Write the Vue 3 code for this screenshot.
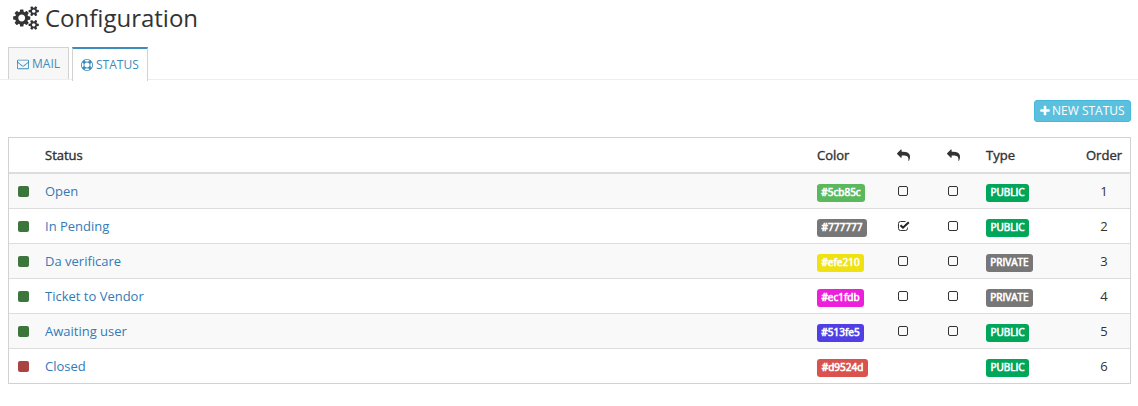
<template>
  <div class="page">
    <h1 class="title">
      <svg class="cogs" viewBox="0 0 1920 1792"><path :d="icons.cogs" /></svg>
      <span>Configuration</span>
    </h1>

    <ul class="tabs">
      <li class="tab">
        <svg class="tab-icon" viewBox="0 0 1792 1792"><path :d="icons.envelope" /></svg>
        <a>MAIL</a>
      </li>
      <li class="tab active">
        <svg class="tab-icon" viewBox="0 0 1792 1792"><path :d="icons.ring" /></svg>
        <a>STATUS</a>
      </li>
    </ul>

    <div class="toolbar">
      <button class="btn-new">
        <svg viewBox="192 0 1408 1792"><path :d="icons.plus" /></svg>
        <span>NEW STATUS</span>
      </button>
    </div>

    <div class="table">
      <div class="row head">
        <div></div>
        <div>Status</div>
        <div>Color</div>
        <div class="center"><svg class="reply" viewBox="0 0 1792 1792"><path :d="icons.reply" /></svg></div>
        <div class="center"><svg class="reply" viewBox="0 0 1792 1792"><path :d="icons.reply" /></svg></div>
        <div>Type</div>
        <div class="center">Order</div>
      </div>
      <div v-for="row in rows" :key="row.order" class="row">
        <div><i class="square" :class="{ closed: row.closed }"></i></div>
        <div><a class="link">{{ row.name }}</a></div>
        <div><span class="label" :style="{ backgroundColor: row.color, width: row.width + 'px' }">{{ row.color }}</span></div>
        <div v-for="(checked, i) in row.checks" :key="i" class="center">
          <svg v-if="checked !== null" class="check" viewBox="0 0 13 13">
            <template v-if="checked">
              <path class="box" d="M10.5 7.5V8.5Q10.5 10.5 8.5 10.5H3.500Q1.5 10.5 1.5 8.5V3.5Q1.5 1.5 3.5 1.5H8.5" />
              <path class="tick" d="M3.500 5.2L6 7.700L11.8 2.2" />
            </template>
            <rect v-else class="box" x="1.5" y="1.5" width="9" height="9" rx="1.5" />
          </svg>
        </div>
        <div><span class="label" :class="row.type.toLowerCase()">{{ row.type }}</span></div>
        <div class="center">{{ row.order }}</div>
      </div>
    </div>
  </div>
</template>

<script setup>
// checks: null means that the status has no checkbox in the column
const rows = [
  { name: 'Open', color: '#5cb85c', width: 48, checks: [false, false], type: 'PUBLIC', order: 1 },
  { name: 'In Pending', color: '#777777', width: 50, checks: [true, false], type: 'PUBLIC', order: 2 },
  { name: 'Da verificare', color: '#efe210', width: 47, checks: [false, false], type: 'PRIVATE', order: 3 },
  { name: 'Ticket to Vendor', color: '#ec1fdb', width: 47, checks: [false, false], type: 'PRIVATE', order: 4 },
  { name: 'Awaiting user', color: '#513fe5', width: 47, checks: [false, false], type: 'PUBLIC', order: 5 },
  { name: 'Closed', color: '#d9524d', width: 51, checks: [null, null], type: 'PUBLIC', order: 6, closed: true }
]

const icons = {
  cogs: 'M896 896q0-106-75-181t-181-75-181 75-75 181 75 181 181 75 181-75 75-181zm768 512q0-52-38-90t-90-38-90 38-38 90q0 53 37.5 90.5t90.5 37.5 90.5-37.5 37.5-90.5zm0-1024q0-52-38-90t-90-38-90 38-38 90q0 53 37.5 90.5t90.5 37.5 90.5-37.5 37.5-90.5zm-384 421v185q0 10-7 19.5t-16 10.5l-155 24q-11 35-32 76 34 48 90 115 7 11 7 20 0 12-7 19-23 30-82.5 89.5t-78.5 59.5q-11 0-21-7l-115-90q-37 19-77 31-11 108-23 155-7 24-30 24h-186q-11 0-20-7.5t-10-17.5l-23-153q-34-10-75-31l-118 89q-7 7-20 7-11 0-21-8-144-133-144-160 0-9 7-19 10-14 41-53t47-61q-23-44-35-82l-152-24q-10-1-17-9.5t-7-19.5v-185q0-10 7-19.5t16-10.5l155-24q11-35 32-76-34-48-90-115-7-11-7-20 0-12 7-20 22-30 82-89t79-59q11 0 21 7l115 90q34-18 77-32 11-108 23-154 7-24 30-24h186q11 0 20 7.5t10 17.5l23 153q34 10 75 31l118-89q8-7 20-7 11 0 21 8 144 133 144 160 0 8-7 19-12 16-42 54t-45 60q23 48 34 82l152 23q10 2 17 10.5t7 19.5zm640 533v140q0 16-149 31-12 27-30 52 51 113 51 138 0 4-4 7-122 71-124 71-8 0-46-47t-52-68q-20 2-30 2t-30-2q-14 21-52 68t-46 47q-2 0-124-71-4-3-4-7 0-25 51-138-18-25-30-52-149-15-149-31v-140q0-16 149-31 13-29 30-52-51-113-51-138 0-4 4-7 4-2 35-20t59-34 30-16q8 0 46 46.5t52 67.5q20-2 30-2t30 2q51-71 92-112l6-2q4 0 124 70 4 3 4 7 0 25-51 138 17 23 30 52 149 15 149 31zm0-1024v140q0 16-149 31-12 27-30 52 51 113 51 138 0 4-4 7-122 71-124 71-8 0-46-47t-52-68q-20 2-30 2t-30-2q-14 21-52 68t-46 47q-2 0-124-71-4-3-4-7 0-25 51-138-18-25-30-52-149-15-149-31v-140q0-16 149-31 13-29 30-52-51-113-51-138 0-4 4-7 4-2 35-20t59-34 30-16q8 0 46 46.5t52 67.5q20-2 30-2t30 2q51-71 92-112l6-2q4 0 124 70 4 3 4 7 0 25-51 138 17 23 30 52 149 15 149 31z',
  envelope: 'M1664 1504v-768q-32 36-69 66-268 206-426 338-51 43-83 67t-86.500 48.500-102.500 24.500h-2q-48 0-102.500-24.500t-86.500-48.500-83-67q-158-132-426-338-37-30-69-66v768q0 13 9.500 22.500t22.500 9.500h1472q13 0 22.500-9.500t9.500-22.500zm0-1051v-24.500l-.5-13-3-12.500-5.500-9-9-7.500-14-2.500h-1472q-13 0-22.500 9.500t-9.500 22.500q0 168 147 284 193 152 401 317 6 5 35 29.500t46 37.500 44.500 31.500 50.500 27.500 43 9h2q20 0 43-9t50.500-27.500 44.500-31.500 46-37.500 35-29.500q208-165 401-317 54-43 100.500-115.500t46.500-131.500zm128-37v1088q0 66-47 113t-113 47h-1472q-66 0-113-47t-47-113v-1088q0-66 47-113t113-47h1472q66 0 113 47t47 113z',
  ring: 'M896 0q182 0 348 71t286 191 191 286 71 348-71 348-191 286-286 191-348 71-348-71-286-191-191-286-71-348 71-348 191-286 286-191 348-71zm0 128q-190 0-361 90l194 194q82-28 167-28t167 28l194-194q-171-90-361-90zm-678 1129l194-194q-28-82-28-167t28-167l-194-194q-90 171-90 361t90 361zm678 407q190 0 361-90l-194-194q-82 28-167 28t-167-28l-194 194q171 90 361 90zm0-384q159 0 271.500-112.500t112.500-271.500-112.500-271.500-271.500-112.500-271.500 112.500-112.500 271.500 112.500 271.500 271.500 112.500zm484-217l194 194q90-171 90-361t-90-361l-194 194q28 82 28 167t-28 167z',
  plus: 'M1600 736v192q0 40-28 68t-68 28h-416v416q0 40-28 68t-68 28h-192q-40 0-68-28t-28-68v-416h-416q-40 0-68-28t-28-68v-192q0-40 28-68t68-28h416v-416q0-40 28-68t68-28h192q40 0 68 28t28 68v416h416q40 0 68 28t28 68z',
  reply: 'M1792 1120q0 166-127 451-3 7-10.500 24t-13.500 30-13 22q-12 17-28 17-15 0-23.500-10t-8.500-25q0-9 2.500-26.500t2.500-23.500q5-68 5-123 0-101-17.500-181t-48.500-138.500-80-101-105.500-69.500-133-42.500-154-21.500-175.500-6h-224v256q0 26-19 45t-45 19-45-19l-512-512q-19-19-19-45t19-45l512-512q19-19 45-19t45 19 19 45v256h224q713 0 875 403 53 134 53 333z'
}
</script>

<style>
body {
  background: #fff;
}
</style>

<style scoped>
.page {
  height: 406px;
  overflow: hidden;
  font-family: 'Open Sans', sans-serif;
  font-size: 13px;
  line-height: 18px;
  color: #333;
}
svg {
  display: block;
  flex: none;
  fill: currentColor;
}
.title {
  display: flex;
  align-items: center;
  gap: 6px;
  height: 36px;
  margin: 0;
  padding: 0 0 0 13px;
  font-size: 24px;
  font-weight: 400;
}
.cogs {
  width: 26px;
  height: 24px;
}

/* Tabs */
.tabs {
  display: flex;
  gap: 3px;
  height: 32px;
  margin: 11px 0 0;
  padding: 0 0 0 8px;
  list-style: none;
  border-bottom: 1px solid #eee;
}
.tab {
  display: flex;
  align-items: center;
  gap: 3px;
  box-sizing: border-box;
  width: 61px;
  height: 32px;
  padding-left: 8px;
  font-size: 12px;
  color: #3c8dbc;
  background: #f7f7f7;
  border: 1px solid #d2d2d2;
  border-bottom: 0;
}
.tab.active {
  width: 76px;
  height: 34px;
  background: #fff;
  border-top: 2px solid #3c8dbc;
}
.tab-icon {
  width: 12px;
  height: 12px;
}

.toolbar {
  display: flex;
  justify-content: flex-end;
  padding: 20px 7px 15px 0;
}
.btn-new {
  display: flex;
  align-items: center;
  gap: 2px;
  box-sizing: border-box;
  width: 97px;
  height: 22px;
  padding: 0 0 1px 5px;
  font: 12px/18px 'Open Sans', sans-serif;
  white-space: nowrap;
  color: #fff;
  background: #5bc0de;
  border: 1px solid #46b8da;
  border-radius: 3px;
}
.btn-new svg {
  width: 10px;
  height: 12px;
}

/* Status table */
.table {
  margin: 0 7px 0 8px;
  border: 1px solid #d2d2d2;
}
.row {
  display: grid;
  grid-template-columns: 28px 772px 64px 45px 60px 92px 1fr;
  align-items: center;
  height: 34px;
  padding-left: 8px;
  border-bottom: 1px solid #ddd;
}
.row:nth-child(even) {
  background: #f9f9f9;
}
.row:last-child {
  border-bottom: 0;
}
.row.head {
  -webkit-text-stroke: 0.4px #333;
  border-bottom-width: 2px;
}
.center {
  display: flex;
  justify-content: center;
}
.row > .center:nth-child(5) {
  width: 55px;
}
.reply {
  width: 13px;
  height: 13px;
}
.square {
  display: block;
  width: 11px;
  height: 11px;
  margin-left: 1px;
  background: #3c763d;
  border-radius: 2px;
}
.square.closed {
  background: #a94442;
}
.link {
  color: #337ab7;
}
.label {
  display: block;
  box-sizing: border-box;
  width: 43px;
  height: 18px;
  margin-top: 4px;
  font-size: 10px;
  line-height: 17px;
  text-align: center;
  color: #fff;
  border-radius: 3px;
  -webkit-text-stroke: 0.6px #fff;
}
.label.public {
  background: #00a65a;
}
.label.private {
  width: 47px;
  background: #777;
}
.check {
  width: 13px;
  height: 13px;
}
.box {
  fill: none;
  stroke: #333;
}
.tick {
  fill: none;
  stroke: #222;
  stroke-width: 2;
}
</style>
